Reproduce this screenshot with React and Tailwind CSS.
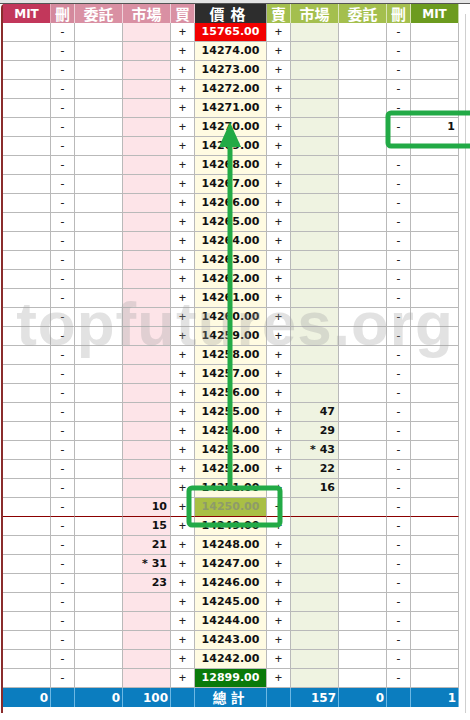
import React from 'react'

const prices = []
for (let p = 14274; p >= 14242; p--) prices.push(p)

const buyMkt = { 14250: '10', 14249: '15', 14248: '21', 14247: '* 31', 14246: '23' }
const sellMkt = { 14255: '47', 14254: '29', 14253: '* 43', 14252: '22', 14251: '16' }
const rightMit = { 14270: '1' }

const num = "font-['DejaVu_Sans',sans-serif] font-bold text-[11px]"
const cell = 'h-full shrink-0 border-r border-b border-[#b9b9b9] flex items-center'

function Row({ price, bg = 'bg-[#fffbe2]', color = 'text-[#111]', line }) {
  const b = line ? 'border-b-[#8b0000]' : ''
  return (
    <div className="flex h-[19px]">
      <div className={`${cell} ${b} w-[48px] bg-white`} />
      <div className={`${cell} ${b} w-[24px] bg-white justify-center text-[12px] text-[#222]`}>-</div>
      <div className={`${cell} ${b} w-[48px] bg-white`} />
      <div className={`${cell} ${b} w-[48px] bg-[#fde4e8] justify-end pr-[3px] ${num} text-[#111]`}>{buyMkt[price] || ''}</div>
      <div className={`${cell} ${b} w-[24px] bg-white justify-center text-[13px] text-[#222]`}>+</div>
      <div className={`${cell} ${b} w-[72px] justify-center ${num} ${bg} ${color}`}>{price}.00</div>
      <div className={`${cell} ${b} w-[24px] bg-white justify-center text-[13px] text-[#222]`}>+</div>
      <div className={`${cell} ${b} w-[48px] bg-[#eff3e1] justify-end pr-[3px] ${num} text-[#111]`}>{sellMkt[price] || ''}</div>
      <div className={`${cell} ${b} w-[48px] bg-white`} />
      <div className={`${cell} ${b} w-[24px] bg-white justify-center text-[12px] text-[#222]`}>-</div>
      <div className={`${cell} ${b} w-[48px] bg-white justify-end pr-[3px] ${num} text-[#111]`}>{rightMit[price] || ''}</div>
    </div>
  )
}

function Head({ w, bg, children, mit }) {
  return (
    <div
      className={`${w} ${bg} h-full shrink-0 border-r border-white/60 flex items-center justify-center text-white font-bold ${
        mit ? "font-['DejaVu_Sans',sans-serif] text-[12px]" : "font-['Noto_Sans_CJK_TC',sans-serif] text-[15px] leading-none"
      }`}
    >
      {children}
    </div>
  )
}

function Foot({ w, children, center }) {
  return (
    <div
      className={`${w} h-full shrink-0 border-r border-[#6cb8e4] flex items-center ${
        center ? 'justify-center' : 'justify-end pr-[2px]'
      } text-white font-bold ${
        center
          ? "font-['Noto_Sans_CJK_TC',sans-serif] text-[14px] tracking-[4px]"
          : "font-['DejaVu_Sans',sans-serif] text-[12px]"
      }`}
    >
      {children}
    </div>
  )
}

export default function App() {
  return (
    <div className="relative w-[470px] h-[720px] bg-white overflow-hidden">
      <div className="h-[4px] bg-[#e4e4e4] border-b border-[#555]" />
      <div className="flex">
        <div className="ml-[1px] border-l-2 border-[#8a2c2c] rounded-tl-[4px] pb-[6px]">
          <div className="flex h-[19px]">
            <Head w="w-[48px]" bg="bg-[#c2375b]" mit>MIT</Head>
            <Head w="w-[24px]" bg="bg-[#d4899d]">刪</Head>
            <Head w="w-[48px]" bg="bg-[#d990a3]">委託</Head>
            <Head w="w-[48px]" bg="bg-[#d990a3]">市場</Head>
            <Head w="w-[24px]" bg="bg-[#d990a3]">買</Head>
            <Head w="w-[72px]" bg="bg-[#2d2d2d]">
              <span className="tracking-[6px]">價格</span>
            </Head>
            <Head w="w-[24px]" bg="bg-[#a4bf4e]">賣</Head>
            <Head w="w-[48px]" bg="bg-[#a4bf4e]">市場</Head>
            <Head w="w-[48px]" bg="bg-[#a4bf4e]">委託</Head>
            <Head w="w-[24px]" bg="bg-[#a4bf4e]">刪</Head>
            <Head w="w-[48px]" bg="bg-[#6c9b1f]" mit>MIT</Head>
          </div>
          <Row price={15765} bg="bg-[#f20000]" color="text-white" />
          {prices.map(p =>
            p === 14250 ? (
              <Row key={p} price={p} bg="bg-[#a9bf45]" color="text-[#8e9b6a]" line />
            ) : (
              <Row key={p} price={p} />
            )
          )}
          <Row price={12899} bg="bg-[#0a7a0a]" color="text-white" />
          <div className="flex h-[19px] bg-[#0b7dbf]">
            <Foot w="w-[48px]">0</Foot>
            <Foot w="w-[24px]" />
            <Foot w="w-[48px]">0</Foot>
            <Foot w="w-[48px]">100</Foot>
            <Foot w="w-[24px]" />
            <Foot w="w-[72px]" center>總計</Foot>
            <Foot w="w-[24px]" />
            <Foot w="w-[48px]">157</Foot>
            <Foot w="w-[48px]">0</Foot>
            <Foot w="w-[24px]" />
            <Foot w="w-[48px]">1</Foot>
          </div>
        </div>
        <div className="ml-[6px] mt-[10px] w-px bg-[#cfcfcf]" />
      </div>

      <div className="absolute left-0 top-[293px] w-[470px] text-center font-['Liberation_Sans',sans-serif] font-bold text-[62px] leading-none text-[#a0a0a0] opacity-30 tracking-[1px] pointer-events-none">
        topfutures.org
      </div>

      <svg className="absolute left-0 top-0 pointer-events-none" width="470" height="720">
        <rect x="189" y="488" width="91" height="37" rx="3" fill="none" stroke="#22aa46" strokeWidth="5" />
        <rect x="388" y="113" width="90" height="33" rx="3" fill="none" stroke="#22aa46" strokeWidth="5" />
        <line x1="230" y1="486" x2="230" y2="145" stroke="#22aa46" strokeWidth="5" />
        <polygon points="230,122 219,147 241,147" fill="#22aa46" />
      </svg>
    </div>
  )
}
